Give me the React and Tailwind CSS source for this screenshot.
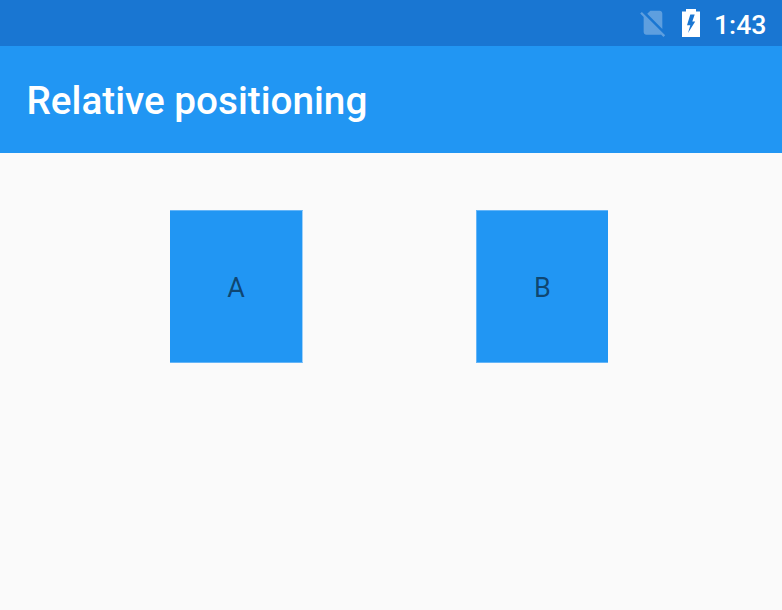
function StatusBar() {
  return (
    <div className="flex h-[46px] items-start justify-end bg-[#1976d2] text-white">
      <svg className="mt-[7px] h-8 w-8" viewBox="0 0.2 24 24">
        <path
          fill="#fff"
          fillOpacity=".3"
          d="M18.99 5c0-1.1-.89-2-1.99-2h-7L7.66 5.34 19 16.68 18.99 5zM3.65 3.88L2.38 5.15 5 7.77V19c0 1.1.9 2 2 2h10.01c.35 0 .67-.1.96-.26l1.88 1.88 1.27-1.27L3.65 3.88z"
        />
      </svg>
      <svg className="mt-[9px] ml-[13px] h-7 w-[18px]" viewBox="0 0 18 28">
        <path fill="#fff" fillRule="evenodd" d="M4 0H14V2.500H18V28H0V2.500H4ZM8.300 5.500L5 16.300H8.300L6 24L13.200 12.500H10.300L12.700 5.500Z" />
      </svg>
      <span className="mt-[8px] mr-[15.500px] ml-[13.500px] text-[26.700px] leading-[34px] font-medium">1:43</span>
    </div>
  );
}

function Box({ className, children }) {
  return (
    <div className={`flex h-[153px] items-center justify-center border-y border-[#64b5f8] bg-[#2196f3] text-[27px] text-black/55 ${className}`}>
      <span className="pt-1">{children}</span>
    </div>
  );
}

export default function App() {
  return (
    <div className="h-[610px] w-[782px] bg-[#fafafa] font-['Roboto',sans-serif]">
      <StatusBar />
      <header className="flex h-[107px] items-center bg-[#2196f3] pt-1 pl-[26.500px] text-white">
        <h1 className="text-[38.700px] leading-none font-medium">Relative positioning</h1>
      </header>
      <main className="flex gap-[173px] pt-[57px] pl-[170px]">
        <Box className="w-[133px] border-r border-r-[#9fd0f8]">A</Box>
        <Box className="w-[132px] border-l">B</Box>
      </main>
    </div>
  );
}
